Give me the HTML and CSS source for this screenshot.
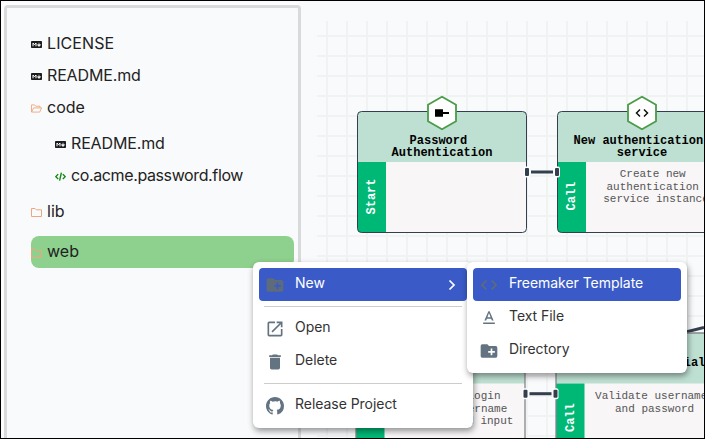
FILE: index.html
```html
<!DOCTYPE html>
<html lang="en">
<head>
<meta charset="utf-8">
<title>Flow editor</title>
<link rel="stylesheet" href="styles.css">
</head>
<body>
<svg class="defs" width="0" height="0">
  <symbol id="md" viewBox="0 0 11 7"><rect width="11" height="7" rx=".8" fill="#1c1c1c"/><path d="M2 5.3V2l1.5 1.7L5 2v3.3" fill="none" stroke="#fff" stroke-width="1"/><path d="M8 1.7v2.5M6.4 3.7h3.2L8 5.5z" fill="#fff" stroke="#fff" stroke-width=".7"/></symbol>
  <symbol id="folder" viewBox="0 0 11 9"><path d="M.5.5h3.6l1.2 1.3h5.2v6.7H.5z" fill="none" stroke="#eda77c"/></symbol>
  <symbol id="folder-open" viewBox="0 0 11 9"><path d="M.5 8V.9h3l1.2 1.3H9v1.6M.6 8.1l2-4.2h8L8.7 8.1z" fill="none" stroke="#eda77c" stroke-width=".9"/></symbol>
  <symbol id="code" viewBox="0 0 11 9"><path d="M3.2 2.1.9 4.6l2.3 2.5M7.8 2.1l2.3 2.5-2.3 2.5M6.4.6l-1.8 8" fill="none" stroke="#138a13" stroke-width="1.4"/></symbol>
  <symbol id="newdir" viewBox="0 0 24 24"><path d="M20 6h-8l-2-2H4a2 2 0 0 0-2 2v12c0 1.1.9 2 2 2h16a2 2 0 0 0 2-2V8a2 2 0 0 0-2-2zm-1 8h-3v3h-2v-3h-3v-2h3V9h2v3h3z"/></symbol>
</svg>
<main class="app">
  <nav class="tree">
    <div class="row"><svg class="ico md"><use href="#md"/></svg><span class="license">LICENSE</span></div>
    <div class="row"><svg class="ico md"><use href="#md"/></svg><span class="readme">README.md</span></div>
    <div class="row"><svg class="ico"><use href="#folder-open"/></svg><span>code</span></div>
    <div class="children">
      <div class="row"><svg class="ico md"><use href="#md"/></svg><span class="readme">README.md</span></div>
      <div class="row"><svg class="ico"><use href="#code"/></svg><span class="flow">co.acme.password.flow</span></div>
    </div>
    <div class="row"><svg class="ico"><use href="#folder"/></svg><span>lib</span></div>
    <div class="row selected"><svg class="ico"><use href="#folder"/></svg><span>web</span></div>
  </nav>
  <svg class="canvas" viewBox="301 1 403 437">
    <defs>
      <pattern id="grid" x="326" y="35" width="20" height="20" patternUnits="userSpaceOnUse"><path d="M1 0v20M0 1h20" stroke="#f1f2f2" stroke-width="2"/></pattern>
      <g id="node">
        <rect x=".5" y=".5" width="169" height="121" rx="4" fill="#f8f6f7"/>
        <path d="M.5 51V4.5a4 4 0 0 1 4-4h161a4 4 0 0 1 4 4V51z" fill="#bee0d2"/>
        <path d="M.5 51H29v70.5H4.5a4 4 0 0 1-4-4z" fill="#00b876"/>
      </g>
      <path id="hex" d="M0-16.2 14-8.3V8.3L0 16.2-14 8.3V-8.3z" fill="#fff" stroke="#4a9c49" stroke-width="1.8"/>
      <g id="link">
        <path d="M4 0h22" stroke="#333f4d" stroke-width="3"/>
        <rect x="-3" y="-5.5" width="6" height="11" rx="2" fill="#fff"/><rect x="27" y="-5.5" width="6" height="11" rx="2" fill="#fff"/>
        <rect x="-2" y="-4" width="4" height="8" rx="1" fill="#333f4d"/><rect x="28" y="-4" width="4" height="8" rx="1" fill="#333f4d"/>
      </g>
    </defs>
    <rect x="317" y="21" width="387" height="417" fill="url(#grid)"/>
    <path d="M680 333.5 704 327.5" stroke="#333f4d" stroke-width="3"/>
    <use href="#node" x="357" y="111"/><rect class="edge" x="357.5" y="111.5" width="169" height="121" rx="4"/>
    <use href="#node" x="557" y="111"/><rect class="edge" x="557.5" y="111.5" width="169" height="121" rx="4"/>
    <use href="#node" x="355.5" y="332.5"/><rect class="edge soft" x="356" y="333" width="169" height="121" rx="4"/>
    <use href="#node" x="555.5" y="332.5"/><rect class="edge soft" x="556" y="333" width="169" height="121" rx="4"/>
    <use href="#hex" x="442" y="113"/><path d="M435 109.200h8v7.600h-8zM443 112h6v2h-6z"/>
    <use href="#hex" x="642" y="113"/><path d="m640 109.500-3.500 3.500 3.500 3.500M644 109.500l3.500 3.500-3.500 3.500" fill="none" stroke="#111" stroke-width="1.5"/>
    <use href="#link" x="527" y="172"/><use href="#link" x="525.5" y="393.700"/>
    <g class="title">
      <text x="409.600" y="144">Password</text><text x="391.600" y="156">Authentication</text>
      <text x="573.600" y="144">New authentication</text><text x="616.800" y="156">service</text>
      <text x="568.500" y="366">Validate credentials</text>
    </g>
    <g class="body">
      <text x="619.700" y="177">Create new</text><text x="606.500" y="190">authentication</text><text x="603.200" y="202">service instance</text>
      <text x="467.500" y="399">login</text><text x="454.500" y="412">username</text><text x="454" y="424">and input</text>
      <text x="595.100" y="399">Validate username</text><text x="615" y="412">and password</text>
    </g>
    <g class="kind">
      <text transform="translate(375 214.500) rotate(-90)">Start</text>
      <text transform="translate(575 210.500) rotate(-90)">Call</text>
      <text transform="translate(574 432) rotate(-90)">Call</text>
    </g>
  </svg>
</main>
<div class="menu main">
  <div class="item active"><svg class="mi" viewBox="0 0 24 24"><use href="#newdir"/></svg><span>New</span><svg class="chev" viewBox="0 0 8 12"><path d="m1.500 1.500 4.500 4.500-4.500 4.500" fill="none" stroke="#fff" stroke-width="1.700"/></svg></div>
  <hr>
  <div class="item"><svg class="mi" viewBox="0 0 24 24"><path d="M19 19H5V5h7V3H5a2 2 0 0 0-2 2v14a2 2 0 0 0 2 2h14a2 2 0 0 0 2-2v-7h-2zM14 3v2h3.590l-9.830 9.830 1.410 1.410L19 6.410V10h2V3z"/></svg><span>Open</span></div>
  <div class="item"><svg class="mi" viewBox="0 0 24 24"><path d="M6 19c0 1.100.9 2 2 2h8a2 2 0 0 0 2-2V7H6zM19 4h-3.500l-1-1h-5l-1 1H5v2h14z"/></svg><span>Delete</span></div>
  <hr>
  <div class="item"><svg class="mi git" viewBox="0 0 16 16"><path d="M8 0C3.580 0 0 3.580 0 8c0 3.540 2.290 6.530 5.470 7.590.4.070.55-.17.55-.38 0-.19-.01-.82-.01-1.490-2.010.37-2.530-.49-2.690-.94-.09-.23-.48-.94-.82-1.130-.28-.15-.68-.52-.01-.53.63-.01 1.080.58 1.230.82.720 1.210 1.870.87 2.330.66.070-.52.280-.87.510-1.070-1.780-.2-3.640-.89-3.640-3.950 0-.87.310-1.590.82-2.150-.08-.2-.36-1.020.08-2.120 0 0 .67-.21 2.200.82A7.600 7.600 0 0 1 8 3.860c.68 0 1.360.09 2 .27 1.530-1.040 2.200-.82 2.200-.82.440 1.100.160 1.920.080 2.120.510.56.82 1.270.82 2.150 0 3.070-1.870 3.750-3.650 3.950.29.25.54.73.54 1.480 0 1.070-.01 1.930-.01 2.200 0 .21.15.46.55.38A8 8 0 0 0 16 8c0-4.420-3.580-8-8-8z"/></svg><span>Release Project</span></div>
</div>
<div class="menu sub">
  <div class="item active"><svg class="mi" viewBox="0 0 24 24"><path d="M9.400 16.600 4.800 12l4.600-4.600L8 6l-6 6 6 6zM14.600 16.600l4.600-4.600-4.600-4.600L16 6l6 6-6 6z"/></svg><span>Freemaker Template</span></div>
  <div class="item"><svg class="mi text-file" viewBox="0 0 24 24"><path d="M5 18.500v2h14v-2zM9.500 14h5l.9 2.200h2.100L12.750 5.200h-1.500L6.500 16.200h2.100zM12 7.180 13.870 12.200h-3.740z"/></svg><span>Text File</span></div>
  <div class="item"><svg class="mi" viewBox="0 0 24 24"><use href="#newdir"/></svg><span>Directory</span></div>
</div>
</body>
</html>
```
FILE: styles.css
```css
* { box-sizing: border-box; }
body { margin: 0; width: 705px; height: 439px; overflow: hidden; position: relative; font-family: Inter, sans-serif; }
.defs { position: absolute; }
.app { display: flex; width: 705px; height: 439px; border: 1px solid #000; background: #f9fafc; }
.tree { flex: 0 0 297px; margin: 4px 0 0 3px; padding: 19px 4px 0 24px; border: 3px solid #d9dadb; border-bottom: 0; border-radius: 4px 4px 0 0; box-shadow: -3px -3px 0 #fdfcff; font-size: 16px; color: #222; }
.row { display: flex; align-items: center; height: 32px; border-radius: 8px; line-height: 32px; }
.ico { width: 11px; height: 9px; margin: 3px 5px 0 0; flex: none; }
.ico.md { height: 7px; }
.license { letter-spacing: .1px; }
.readme { letter-spacing: -.15px; }
.flow { letter-spacing: -.38px; }
.children { padding: 4px 0 4px 24px; }
.selected { margin-top: 9px; background: #8ed08e; }
.selected span { margin-top: -2px; }
.canvas { width: 403px; height: 437px; flex: none; }
.edge { fill: none; stroke: #333f4d; }
.soft { stroke: #85868b; stroke-width: 1.3; }
.canvas text { font-family: "Liberation Mono", monospace; }
.title text { font-size: 12px; font-weight: bold; fill: #000; }
.body text { font-size: 11px; fill: #555; }
.kind text { font-size: 12px; font-weight: bold; fill: #fff; }
.menu { position: absolute; top: 262px; width: 220px; padding: 6px; border-radius: 6px; background: #fff; box-shadow: 1px 3px 6px rgba(0,0,0,.42); font-size: 14px; color: #333; }
.main { left: 253px; height: 166px; }
.sub { left: 467px; height: 111px; }
.item { display: flex; align-items: center; height: 33px; padding-left: 6px; border-radius: 4px; letter-spacing: -.04px; }
.item span { margin-top: -5px; }
.active { background: #3a5bc7; color: #fff; }
.mi { width: 20px; height: 20px; margin-right: 10px; fill: #637381; flex: none; }
.text-file { margin-top: -1px; }
.git { width: 18px; height: 18px; margin: 0 11px 0 1px; }
.active .mi { fill: #5d6b7a; }
.chev { width: 8px; height: 12px; margin-left: auto; margin-right: 11px; }
.menu hr { height: 1px; margin: 5px; border: 0; background: #ccc; }
```
